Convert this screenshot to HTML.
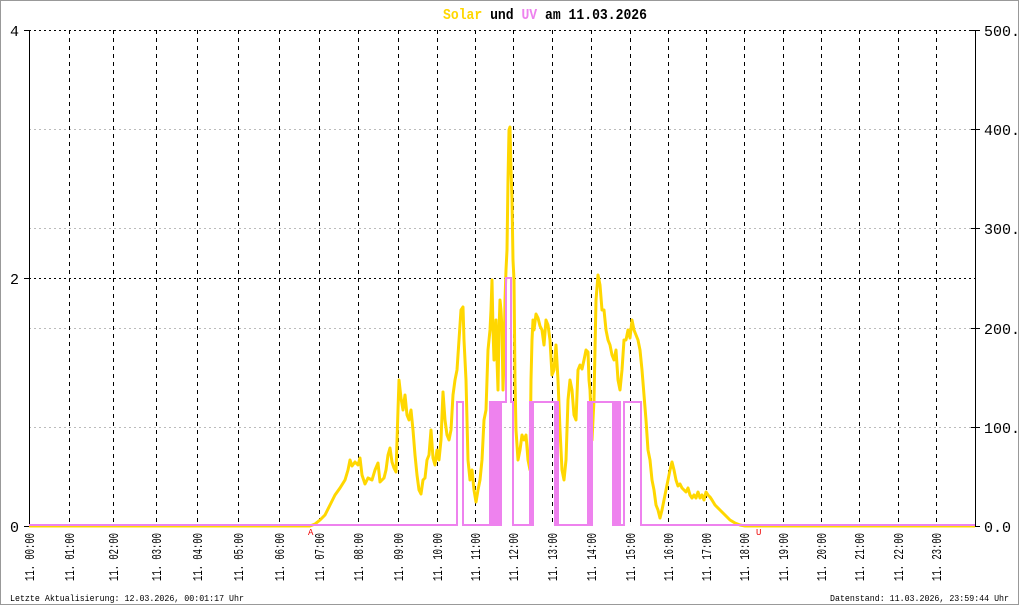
<!DOCTYPE html>
<html><head><meta charset="utf-8"><style>
html,body{margin:0;padding:0;background:#fff;}
svg{display:block;}
text{font-family:"Liberation Mono","DejaVu Sans Mono",monospace;}
</style></head><body>
<svg width="1020" height="606" viewBox="0 0 1020 606" xmlns="http://www.w3.org/2000/svg">
<rect x="0.5" y="0.5" width="1018" height="604" fill="#fff" stroke="#999" stroke-width="1"/>
<text x="443" y="19" font-size="15" font-weight="bold" textLength="204" lengthAdjust="spacingAndGlyphs"><tspan fill="#ffd700">Solar</tspan><tspan fill="#000"> und </tspan><tspan fill="#ee82ee">UV</tspan><tspan fill="#000"> am 11.03.2026</tspan></text>
<g stroke="#bbb" stroke-width="1" stroke-dasharray="2,3">
<line x1="29" y1="129.5" x2="975" y2="129.5"/>
<line x1="29" y1="228.5" x2="975" y2="228.5"/>
<line x1="29" y1="328.5" x2="975" y2="328.5"/>
<line x1="29" y1="427.5" x2="975" y2="427.5"/>
</g>
<g stroke="#000" stroke-width="1" stroke-dasharray="2,3">
<line x1="29" y1="30.5" x2="975" y2="30.5"/>
<line x1="29" y1="278.5" x2="975" y2="278.5"/>
</g>
<g stroke="#000" stroke-width="1" stroke-dasharray="4,4">
<line x1="69.5" y1="30" x2="69.5" y2="526"/>
<line x1="113.5" y1="30" x2="113.5" y2="526"/>
<line x1="156.5" y1="30" x2="156.5" y2="526"/>
<line x1="197.5" y1="30" x2="197.5" y2="526"/>
<line x1="238.5" y1="30" x2="238.5" y2="526"/>
<line x1="279.5" y1="30" x2="279.5" y2="526"/>
<line x1="319.5" y1="30" x2="319.5" y2="526"/>
<line x1="358.5" y1="30" x2="358.5" y2="526"/>
<line x1="398.5" y1="30" x2="398.5" y2="526"/>
<line x1="437.5" y1="30" x2="437.5" y2="526"/>
<line x1="475.5" y1="30" x2="475.5" y2="526"/>
<line x1="513.5" y1="30" x2="513.5" y2="526"/>
<line x1="552.5" y1="30" x2="552.5" y2="526"/>
<line x1="591.5" y1="30" x2="591.5" y2="526"/>
<line x1="630.5" y1="30" x2="630.5" y2="526"/>
<line x1="668.5" y1="30" x2="668.5" y2="526"/>
<line x1="706.5" y1="30" x2="706.5" y2="526"/>
<line x1="744.5" y1="30" x2="744.5" y2="526"/>
<line x1="783.5" y1="30" x2="783.5" y2="526"/>
<line x1="821.5" y1="30" x2="821.5" y2="526"/>
<line x1="859.5" y1="30" x2="859.5" y2="526"/>
<line x1="898.5" y1="30" x2="898.5" y2="526"/>
<line x1="936.5" y1="30" x2="936.5" y2="526"/>
</g>
<g stroke="#000" stroke-width="1">
<line x1="29.5" y1="30" x2="29.5" y2="526"/>
<line x1="975.5" y1="30" x2="975.5" y2="526"/>
<line x1="24" y1="30.5" x2="30" y2="30.5"/>
<line x1="24" y1="278.5" x2="30" y2="278.5"/>
<line x1="24" y1="526.5" x2="30" y2="526.5"/>
<line x1="971" y1="30.5" x2="980" y2="30.5"/>
<line x1="971" y1="129.5" x2="980" y2="129.5"/>
<line x1="971" y1="228.5" x2="980" y2="228.5"/>
<line x1="971" y1="328.5" x2="980" y2="328.5"/>
<line x1="971" y1="427.5" x2="980" y2="427.5"/>
<line x1="971" y1="526.5" x2="980" y2="526.5"/>
</g>
<g font-size="15" fill="#000">
<text x="10" y="36">4</text>
<text x="10" y="284">2</text>
<text x="10" y="532">0</text>
<text x="984" y="36">500.0</text>
<text x="984" y="135">400.0</text>
<text x="984" y="234">300.0</text>
<text x="984" y="334">200.0</text>
<text x="984" y="433">100.0</text>
<text x="984" y="532">0.0</text>
</g>
<polyline fill="none" stroke="#ffd700" stroke-width="3" stroke-linejoin="round" points="29,526 310,526 315,524 320,520 325,515 330,505 335,495 340,488 345,480 348,470 350,460 352,466 355,462 358,465 360,458 362,475 365,484 368,478 372,480 375,470 378,463 380,482 384,478 386,470 388,455 390,448 392,462 394,468 396,472 398,410 399,380 401,398 403,410 405,395 407,415 409,420 411,410 413,430 415,455 417,475 419,490 421,494 423,480 425,478 427,460 429,455 431,430 433,458 435,465 437,450 439,460 441,440 443,392 445,420 447,435 449,440 451,430 453,395 455,380 457,370 459,340 461,310 463,307 464,340 466,380 468,460 470,480 472,470 474,490 476,502 478,490 480,480 482,460 484,420 486,410 488,350 490,330 491,310 492,280 493,330 494,360 495,340 496,320 497,360 498,390 499,330 500,300 501,310 502,330 503,390 504,360 505,300 506,270 507,250 508,180 509,130 510,127 511,170 512,200 513,260 514,280 515,380 516,430 518,460 520,450 522,435 524,440 526,435 528,460 530,470 531,380 532,340 533,320 534,330 536,314 538,318 540,326 542,330 544,345 546,320 548,325 550,340 552,375 554,370 556,345 558,380 560,430 562,470 564,480 566,460 568,400 570,380 572,390 574,415 576,420 578,370 580,365 582,369 584,360 586,350 588,352 589,380 590,390 592,440 594,400 596,300 598,275 600,285 602,310 604,310 606,330 608,340 610,345 612,355 614,360 616,350 618,380 620,390 622,370 624,340 626,340 628,330 630,338 632,320 634,330 636,335 638,340 640,350 642,370 644,395 646,420 648,450 650,460 652,480 654,490 656,505 658,510 660,518 662,510 664,500 666,490 668,480 670,470 672,462 674,470 676,480 678,486 680,484 682,488 684,490 686,492 688,488 690,495 692,498 694,495 696,498 698,492 700,498 702,495 704,500 706,492 708,495 710,497 712,500 715,505 720,510 725,515 730,520 735,523 740,525 745,526 975,526"/>
<polyline fill="none" stroke="#ee82ee" stroke-width="2" points="29,525 457,525 457,402 463,402 463,525 490,525 490,402 492,402 492,525 494,525 494,402 496,402 496,525 498,525 498,402 500,402 500,525 501,525 501,402 506,402 506,278 511,278 511,402 513,402 513,525 530,525 530,402 532,402 532,525 533,525 533,402 555,402 555,525 556,525 556,402 558,402 558,525 588,525 588,402 590,402 590,525 592,525 592,402 613,402 613,525 614,525 614,402 616,402 616,525 618,525 618,402 620,402 620,525 624,525 624,402 641,402 641,525 975,525"/>
<text x="308" y="535" font-size="9" fill="#e00">A</text>
<text x="756" y="535" font-size="9" fill="#e00">U</text>
<g font-size="14" fill="#000">
<text transform="translate(34,581) rotate(-90)" textLength="48" lengthAdjust="spacingAndGlyphs">11. 00:00</text>
<text transform="translate(74,581) rotate(-90)" textLength="48" lengthAdjust="spacingAndGlyphs">11. 01:00</text>
<text transform="translate(118,581) rotate(-90)" textLength="48" lengthAdjust="spacingAndGlyphs">11. 02:00</text>
<text transform="translate(161,581) rotate(-90)" textLength="48" lengthAdjust="spacingAndGlyphs">11. 03:00</text>
<text transform="translate(202,581) rotate(-90)" textLength="48" lengthAdjust="spacingAndGlyphs">11. 04:00</text>
<text transform="translate(243,581) rotate(-90)" textLength="48" lengthAdjust="spacingAndGlyphs">11. 05:00</text>
<text transform="translate(284,581) rotate(-90)" textLength="48" lengthAdjust="spacingAndGlyphs">11. 06:00</text>
<text transform="translate(324,581) rotate(-90)" textLength="48" lengthAdjust="spacingAndGlyphs">11. 07:00</text>
<text transform="translate(363,581) rotate(-90)" textLength="48" lengthAdjust="spacingAndGlyphs">11. 08:00</text>
<text transform="translate(403,581) rotate(-90)" textLength="48" lengthAdjust="spacingAndGlyphs">11. 09:00</text>
<text transform="translate(442,581) rotate(-90)" textLength="48" lengthAdjust="spacingAndGlyphs">11. 10:00</text>
<text transform="translate(480,581) rotate(-90)" textLength="48" lengthAdjust="spacingAndGlyphs">11. 11:00</text>
<text transform="translate(518,581) rotate(-90)" textLength="48" lengthAdjust="spacingAndGlyphs">11. 12:00</text>
<text transform="translate(557,581) rotate(-90)" textLength="48" lengthAdjust="spacingAndGlyphs">11. 13:00</text>
<text transform="translate(596,581) rotate(-90)" textLength="48" lengthAdjust="spacingAndGlyphs">11. 14:00</text>
<text transform="translate(635,581) rotate(-90)" textLength="48" lengthAdjust="spacingAndGlyphs">11. 15:00</text>
<text transform="translate(673,581) rotate(-90)" textLength="48" lengthAdjust="spacingAndGlyphs">11. 16:00</text>
<text transform="translate(711,581) rotate(-90)" textLength="48" lengthAdjust="spacingAndGlyphs">11. 17:00</text>
<text transform="translate(749,581) rotate(-90)" textLength="48" lengthAdjust="spacingAndGlyphs">11. 18:00</text>
<text transform="translate(788,581) rotate(-90)" textLength="48" lengthAdjust="spacingAndGlyphs">11. 19:00</text>
<text transform="translate(826,581) rotate(-90)" textLength="48" lengthAdjust="spacingAndGlyphs">11. 20:00</text>
<text transform="translate(864,581) rotate(-90)" textLength="48" lengthAdjust="spacingAndGlyphs">11. 21:00</text>
<text transform="translate(903,581) rotate(-90)" textLength="48" lengthAdjust="spacingAndGlyphs">11. 22:00</text>
<text transform="translate(941,581) rotate(-90)" textLength="48" lengthAdjust="spacingAndGlyphs">11. 23:00</text>
</g>
<g font-size="9" fill="#000">
<text x="10" y="601" textLength="234" lengthAdjust="spacingAndGlyphs">Letzte Aktualisierung: 12.03.2026, 00:01:17 Uhr</text>
<text x="830" y="601" textLength="179" lengthAdjust="spacingAndGlyphs">Datenstand: 11.03.2026, 23:59:44 Uhr</text>
</g>
</svg>
</body></html>
